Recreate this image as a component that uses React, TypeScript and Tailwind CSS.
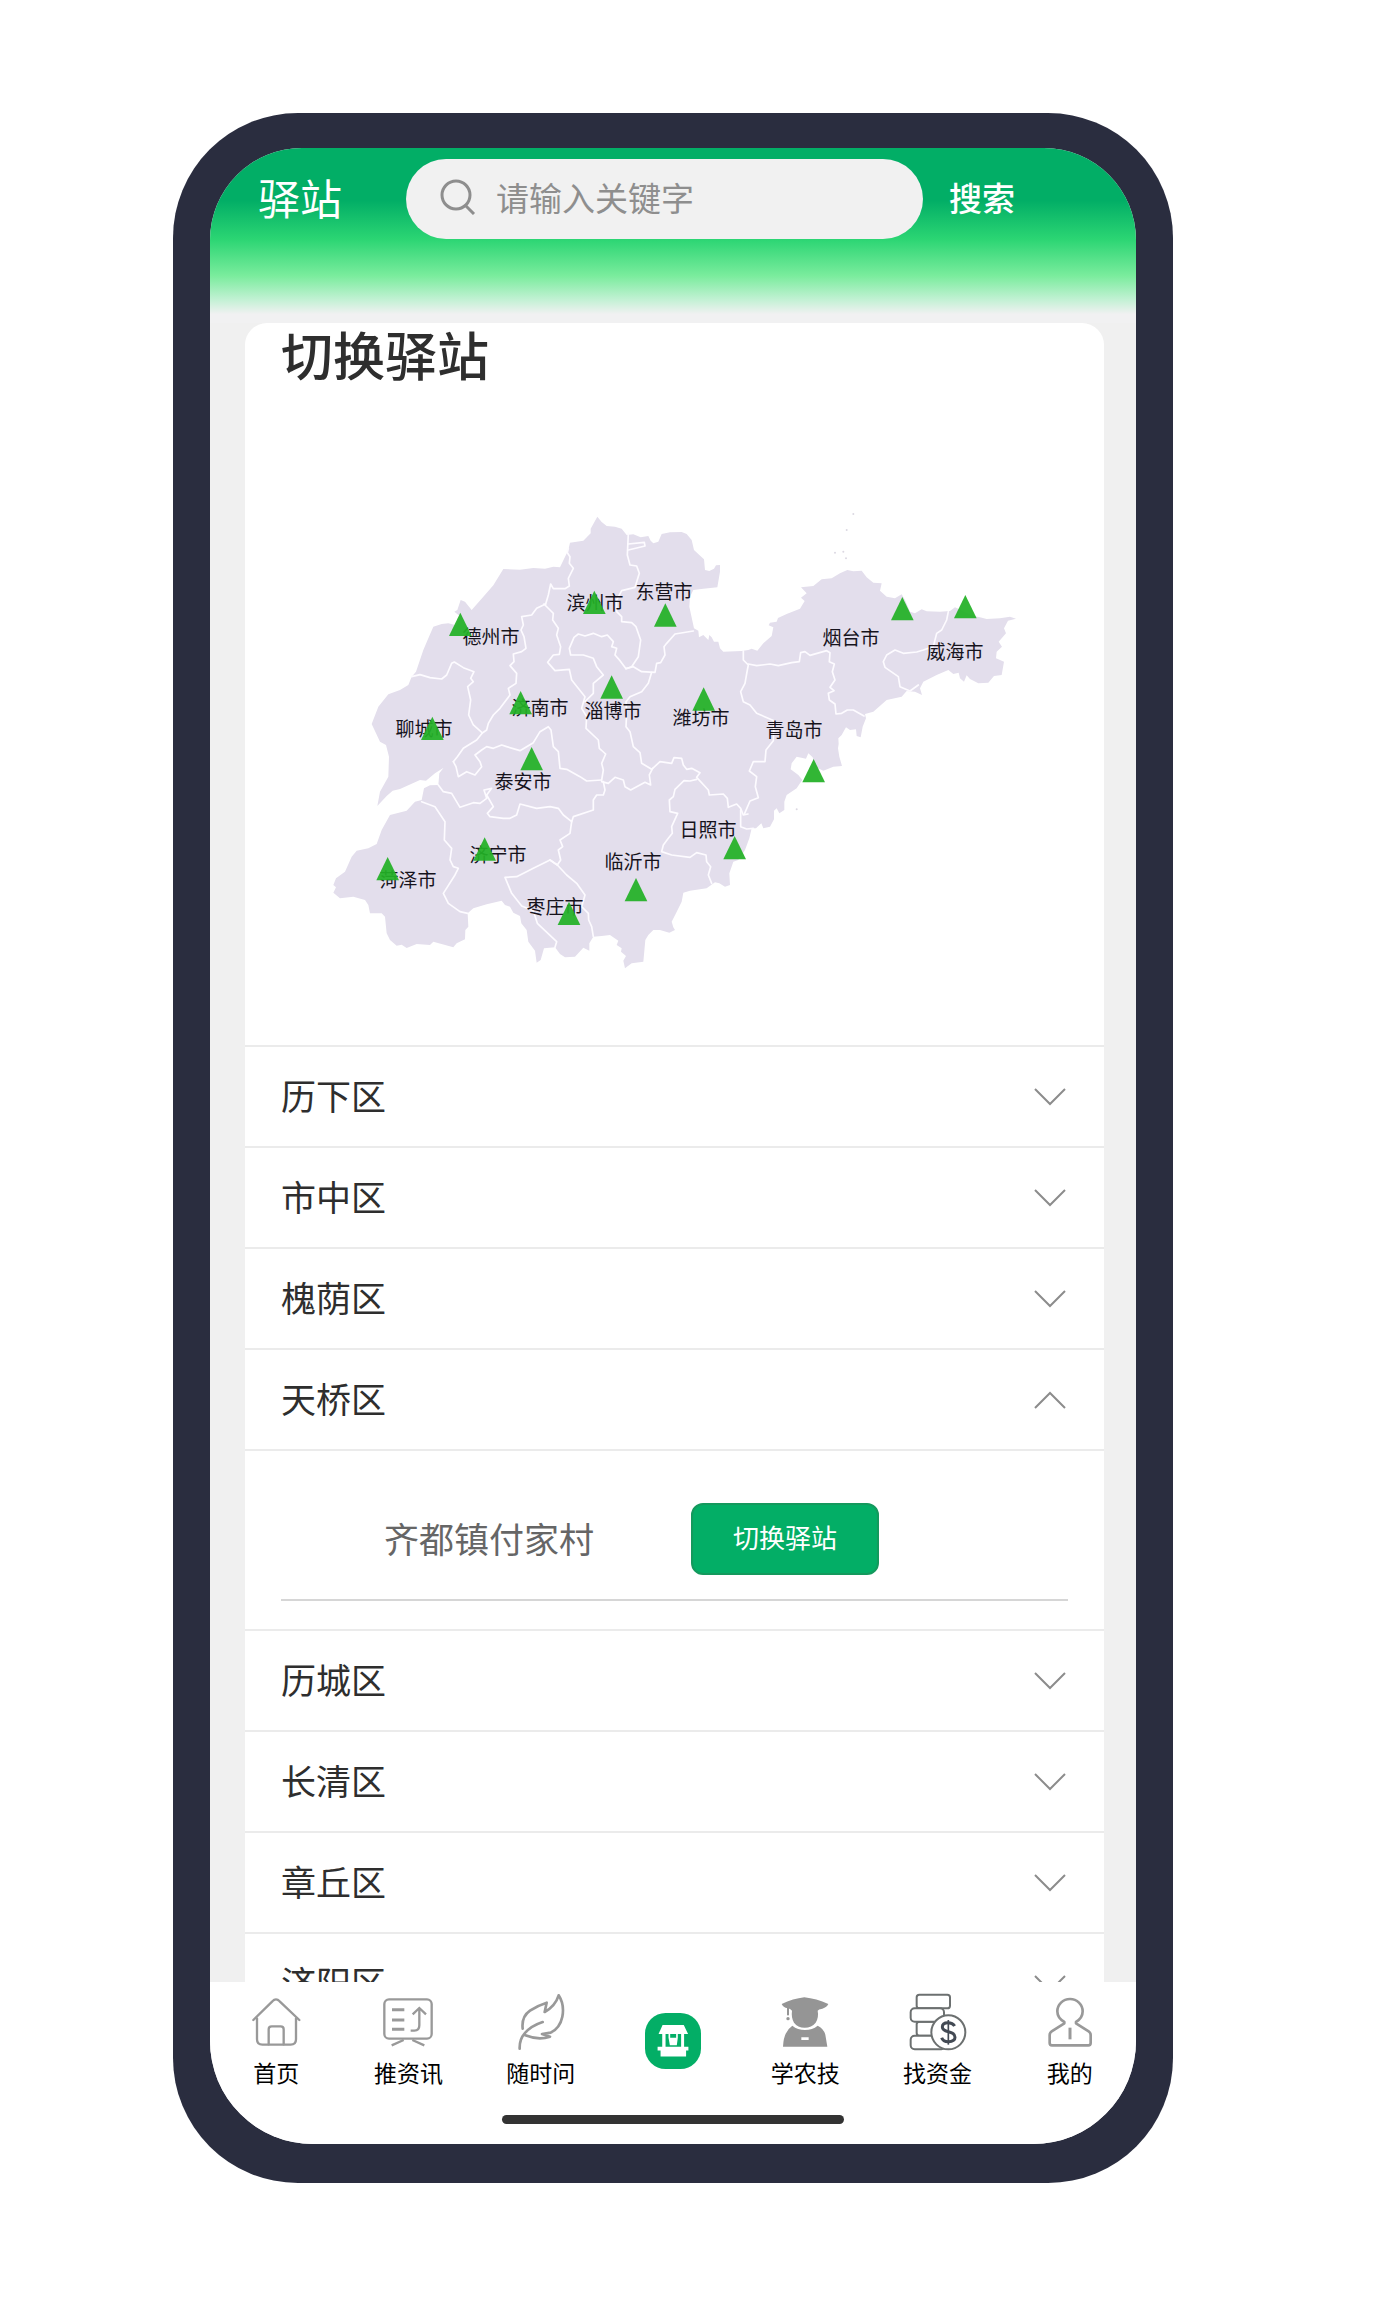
import { useState } from "react";

const LAND =
  "M832,50 L845,66 L860,78 L885,80 L905,86 L920,105 L940,103 L962,112 L985,108 L992,122 L1000,130 L1015,125 L1025,102 L1050,97 L1085,96 L1100,102 L1115,120 L1122,150 L1138,165 L1152,178 L1155,210 L1168,213 L1182,206 L1188,196 L1200,195 L1200,215 L1192,262 L1150,266 L1120,270 L1110,290 L1108,320 L1122,385 L1135,392 L1137,412 L1150,405 L1165,420 L1168,405 L1175,412 L1182,425 L1195,425 L1200,445 L1210,455 L1265,453 L1285,450 L1295,446 L1312,452 L1330,430 L1355,408 L1360,382 L1346,376 L1350,368 L1370,365 L1374,354 L1400,342 L1440,326 L1454,303 L1443,293 L1460,280 L1443,262 L1480,258 L1505,238 L1535,235 L1560,220 L1582,210 L1600,214 L1625,212 L1640,232 L1660,248 L1685,250 L1680,272 L1700,290 L1725,295 L1745,283 L1755,300 L1770,335 L1785,340 L1805,328 L1820,334 L1860,335 L1890,333 L1905,322 L1960,348 L1980,352 L2000,357 L2040,355 L2070,350 L2088,356 L2064,362 L2052,385 L2058,400 L2036,425 L2046,440 L2030,455 L2028,475 L2052,485 L2045,525 L2022,528 L2005,548 L1975,550 L1950,537 L1940,526 L1932,545 L1920,535 L1916,518 L1900,522 L1885,510 L1850,525 L1810,545 L1800,565 L1806,585 L1785,575 L1760,573 L1745,590 L1700,600 L1660,635 L1635,642 L1638,655 L1628,680 L1622,712 L1610,708 L1608,688 L1590,690 L1578,682 L1565,705 L1555,715 L1556,732 L1554,745 L1558,770 L1566,798 L1540,800 L1510,812 L1485,800 L1478,772 L1465,760 L1458,776 L1430,770 L1415,790 L1412,808 L1435,825 L1447,840 L1440,850 L1430,865 L1400,885 L1393,905 L1393,930 L1378,940 L1370,925 L1362,932 L1362,958 L1350,980 L1330,985 L1324,970 L1308,985 L1295,985 L1288,1015 L1275,1050 L1255,1080 L1240,1085 L1228,1120 L1230,1155 L1215,1160 L1198,1150 L1185,1147 L1160,1165 L1110,1172 L1090,1178 L1085,1205 L1068,1240 L1055,1265 L1060,1282 L1065,1290 L1048,1298 L1020,1290 L1000,1290 L985,1305 L976,1320 L970,1385 L935,1390 L915,1405 L910,1382 L918,1368 L903,1355 L905,1345 L890,1335 L895,1322 L870,1305 L845,1308 L820,1310 L808,1330 L808,1352 L790,1343 L765,1370 L735,1372 L720,1362 L705,1342 L672,1345 L662,1380 L650,1388 L645,1352 L625,1325 L620,1290 L604,1270 L600,1248 L580,1238 L570,1220 L555,1215 L545,1202 L500,1213 L460,1225 L443,1240 L445,1280 L436,1290 L435,1318 L410,1330 L400,1342 L340,1325 L330,1335 L290,1332 L260,1344 L245,1334 L230,1337 L210,1320 L200,1300 L195,1250 L185,1240 L150,1240 L145,1215 L135,1200 L100,1190 L60,1195 L40,1178 L48,1162 L40,1155 L48,1135 L75,1115 L95,1070 L110,1052 L145,1045 L170,1032 L185,990 L210,945 L260,932 L285,905 L305,900 L312,865 L330,856 L355,855 L358,820 L372,802 L400,785 L345,820 L318,842 L300,840 L240,867 L218,872 L200,888 L172,918 L180,875 L205,830 L207,770 L198,735 L180,725 L155,672 L175,620 L205,583 L240,570 L265,555 L275,530 L288,515 L310,450 L325,415 L340,380 L365,372 L385,370 L408,376 L422,350 L403,335 L412,330 L422,300 L435,305 L455,330 L490,290 L520,256 L550,207 L600,209 L640,204 L675,206 L700,200 L720,202 L745,150 L750,128 L790,122 L812,100 L812,86 Z";

const BORDERS = [
  "M745,145 L742,158 L750,170 L748,190 L760,205 L745,235 L748,258 L735,266 L700,266 L692,252 L685,285 L677,312",
  "M677,312 L650,325 L635,345 L605,350 L610,375 L603,390 L612,410 L618,445 L605,455 L580,462 L582,485 L570,497 L590,520 L588,550 L565,565 L570,585 L540,625 L520,645 L505,670 L500,690 L487,699",
  "M275,530 L300,524 L330,533 L365,537 L380,525 L395,490 L403,486 L430,503 L462,515 L452,535 L460,545 L443,560 L452,600 L446,645 L460,675 L487,699",
  "M487,699 L470,720 L430,745 L412,770 L400,785",
  "M672,312 L690,330 L700,340 L698,360 L715,385 L710,405 L722,440 L718,463 L700,465 L683,487 L705,512 L748,508 L755,540 L795,590 L785,625 L800,650 L798,685 L835,720 L838,745 L857,762 L845,790 L850,810 L845,840",
  "M925,100 L922,165 L930,195 L950,198 L958,220 L945,262 L905,272 L890,300 L890,335 L905,350 L905,365 L935,368 L948,380 L962,420 L955,470 L935,500 L918,506 L900,482 L885,465 L890,445 L875,440 L880,425 L862,405 L845,410 L820,400 L795,408 L775,402 L762,412 L748,445 L752,465 L790,465 L820,475 L830,500 L850,525 L820,550 L820,580 L795,605",
  "M918,506 L940,500 L965,515 L1005,517 L1010,490 L1022,488 L1035,465 L1032,440 L1040,430 L1065,402 L1120,393",
  "M995,517 L985,550 L965,575 L930,590 L918,605 L920,640 L918,680 L930,695 L940,740 L960,758 L965,790 L995,808",
  "M845,845 L865,850 L885,832 L910,840 L915,860 L932,870 L975,847 L992,855 L988,825 L998,805",
  "M995,808 L1020,785 L1055,790 L1062,773 L1085,775 L1090,795 L1100,808 L1115,805 L1140,818 L1130,832 L1165,870 L1168,885 L1210,882 L1222,895 L1225,922 L1250,912 L1262,925 L1270,945 L1284,942",
  "M1274,940 L1290,903 L1315,893 L1306,860 L1310,830 L1288,813 L1300,785 L1335,785 L1338,750 L1360,722 L1362,662 L1310,640 L1290,615 L1270,605 L1262,575 L1275,550 L1282,510 L1285,495 L1270,480 L1270,452",
  "M1285,492 L1310,497 L1350,492 L1375,497 L1415,488 L1438,485 L1442,458 L1455,455 L1470,466 L1520,452 L1530,458 L1528,485 L1543,492 L1537,515 L1545,540 L1530,562 L1542,572 L1525,580 L1528,600 L1545,612 L1548,642 L1565,640 L1582,630 L1600,630 L1632,648",
  "M1885,335 L1880,360 L1865,390 L1850,400 L1840,440 L1810,450 L1790,456 L1750,460 L1725,450 L1700,465 L1690,485 L1695,502 L1735,530 L1740,560 L1770,573 L1795,555",
  "M1130,838 L1110,843 L1092,842 L1065,868 L1060,890 L1048,900 L1050,935 L1073,940 L1055,980 L1057,1000 L1045,1015 L1030,1035 L1025,1055 L1055,1065 L1110,1072 L1130,1058 L1158,1065 L1160,1085 L1172,1100 L1165,1125 L1175,1150",
  "M1262,930 L1262,980 L1280,987 L1300,985",
  "M400,785 L408,800 L415,830 L440,815 L465,825 L485,800 L480,785 L465,765 L485,750 L500,740 L520,745 L545,735 L560,740 L600,752 L640,728 L660,695 L685,680 L693,690 L700,740 L715,755 L720,805 L740,808 L780,830 L800,843 L845,840",
  "M355,855 L370,875 L395,880 L420,922 L460,908 L480,910 L500,895 L492,870 L515,865 L500,885 L520,920 L502,940 L510,950 L550,955 L570,955 L590,945 L600,912 L650,925 L690,920 L715,925 L730,945 L755,965 L760,950 L820,930 L820,900 L830,885 L850,885 L855,870 L850,845",
  "M305,905 L345,920 L375,965 L373,1020 L395,1045 L390,1080 L400,1100 L415,1105 L405,1125 L370,1180 L385,1210 L420,1235 L443,1240",
  "M755,965 L750,1000 L720,1020 L728,1040 L715,1050 L722,1080 L712,1095 L690,1080 L640,1105 L590,1130 L555,1132 L575,1180 L605,1218 L640,1232 L652,1270 L710,1325 L705,1342",
  "M690,1080 L712,1095 L740,1125 L770,1150 L795,1185 L785,1220 L805,1240 L806,1260 L815,1280 L820,1310",
  "M925,132 L973,127 L975,138 L925,150",
];

const CITIES = [
  { name: "德州市", x: 491, y: 637, px: 421, py: 338 },
  { name: "滨州市", x: 595, y: 603, px: 823, py: 272 },
  { name: "东营市", x: 664, y: 592, px: 1036, py: 310 },
  { name: "济南市", x: 540, y: 708, px: 602, py: 573 },
  { name: "聊城市", x: 424, y: 729, px: 337, py: 650 },
  { name: "淄博市", x: 613, y: 711, px: 875, py: 526 },
  { name: "泰安市", x: 523, y: 782, px: 635, py: 741 },
  { name: "济宁市", x: 498, y: 855, px: 494, py: 1012 },
  { name: "菏泽市", x: 408, y: 880, px: 203, py: 1071 },
  { name: "枣庄市", x: 555, y: 907, px: 747, py: 1205 },
  { name: "临沂市", x: 633, y: 862, px: 948, py: 1134 },
  { name: "潍坊市", x: 701, y: 718, px: 1151, py: 562 },
  { name: "烟台市", x: 851, y: 638, px: 1747, py: 291 },
  { name: "威海市", x: 955, y: 652, px: 1936, py: 285 },
  { name: "青岛市", x: 794, y: 730, px: 1481, py: 777 },
  { name: "日照市", x: 708, y: 830, px: 1244, py: 1008 },
];

const ISLETS = [
  [1600, 42],
  [1580, 90],
  [1545, 158],
  [1570, 155],
  [1578, 175],
  [1430, 928],
];

function ProvinceMap() {
  return (
    <svg viewBox="245 387 859 658" className="block w-full" role="img" aria-label="山东省驿站地图">
      <g transform="translate(320 500) scale(0.33333)" strokeLinejoin="round" strokeLinecap="round">
        <path d={LAND} fill="#e3deec" />
        {BORDERS.map((d) => (
          <path key={d} d={d} fill="none" stroke="#fdfbff" strokeWidth="5" />
        ))}
        {ISLETS.map(([x, y]) => (
          <circle key={`${x}-${y}`} cx={x} cy={y} r="3" fill="#dcd8e2" />
        ))}
      </g>
      <g fontSize="19" textAnchor="middle" fill="#16131c">
        {CITIES.map((c) => (
          <text key={c.name} x={c.x} y={c.y + 7}>
            {c.name}
          </text>
        ))}
      </g>
      <g transform="translate(320 500) scale(0.33333)" fill="#22b026" fillOpacity="0.93">
        {CITIES.map((c) => (
          <path key={c.name} d={`M${c.px},${c.py} l34,70 h-68 z`} />
        ))}
      </g>
    </svg>
  );
}

const DISTRICTS = ["历下区", "市中区", "槐荫区", "天桥区", "历城区", "长清区", "章丘区", "济阳区"];

function Chevron({ up }: { up: boolean }) {
  return (
    <svg width="32" height="18" viewBox="0 0 32 18" fill="none" stroke="#8c8c8c" strokeWidth="2" aria-hidden="true">
      <path d={up ? "M1,17 L16,2 L31,17" : "M1,1 L16,16 L31,1"} />
    </svg>
  );
}

function HomeIcon() {
  return (
    <svg viewBox="54 72 168 168" className="size-14" fill="none" stroke="#999" strokeWidth="7" strokeLinecap="round">
      <path d="M70,150 L127,94 Q138,82 149,94 L208,150" />
      <path d="M81,145 V208 Q81,224 97,224 H182 Q198,224 198,208 V145" />
      <path d="M116,223 V178 Q116,169 125,169 H152 Q161,169 161,178 V223" />
    </svg>
  );
}

function NewsIcon() {
  return (
    <svg viewBox="453 72 168 168" className="size-14" fill="none" stroke="#999" strokeWidth="7">
      <rect x="466" y="88" width="142" height="118" rx="14" />
      <path d="M489,119 H526 M489,150 H526 M489,178 H526" strokeWidth="9" />
      <path d="M545,182 H556 Q571,182 571,166 V118 M551,133 L571,114 L591,133" />
      <path d="M488,226 L524,210 M586,226 L550,210" />
    </svg>
  );
}

function LeafIcon() {
  return (
    <svg viewBox="849 72 168 168" className="size-14" fill="none" stroke="#999" strokeWidth="8" strokeLinecap="round" strokeLinejoin="round">
      <path d="M869,236 Q868,208 884,190 Q902,168 938,156" />
      <path d="M878,176 Q874,140 900,122 Q924,106 950,98 L944,126 Q976,108 986,76 Q1004,104 997,140 Q990,174 962,188 L936,192 L960,200 Q926,212 886,196" />
    </svg>
  );
}

function StationIcon() {
  return (
    <svg viewBox="137 128 169 169" className="size-14">
      <rect x="137" y="128" width="169" height="169" rx="62" fill="#03ae66" />
      <g fill="#fff">
        <path d="M190,164 H254 L267,191 H178 Z" />
        <path d="M189,191 h10 v40 h-10 z M246,191 h9 v40 h-9 z" />
        <path d="M208,191 h5 v12 h18 v-12 h5 v12 l-3,22 h-21 l-4,-22 z" />
        <path d="M175,230 H268 V241 H261 V259 H184 V241 H175 Z" />
      </g>
    </svg>
  );
}

function GraduateIcon() {
  return (
    <svg viewBox="532 72 168 168" className="size-14" fill="#959595">
      <path d="M546,102 Q580,86 614,82 Q650,86 686,102 Q682,112 668,116 Q656,118 654,122 Q658,142 648,158 Q636,173 615,173 Q594,173 583,158 Q574,142 577,122 Q572,116 564,115 Q550,112 546,102 Z" />
      <path d="M562,114 h6 v22 h-6 z" />
      <circle cx="565" cy="146" r="5" />
      <path
        fillRule="evenodd"
        d="M578,167 Q594,180 616,180 Q638,180 654,167 Q672,176 677,194 L683,230 H550 Q552,184 578,167 Z M605,202 V210 H627 V202 Z"
      />
    </svg>
  );
}

function FundsIcon() {
  return (
    <svg viewBox="238 72 168 168" className="size-14" overflow="visible" fill="#fff" stroke="#6c7070" strokeWidth="6">
      <rect x="258" y="74" width="100" height="41" rx="8" />
      <rect x="258" y="155" width="90" height="42" rx="8" />
      <rect x="240" y="115" width="100" height="40" rx="12" />
      <rect x="240" y="197" width="104" height="41" rx="12" />
      <circle cx="353" cy="187" r="51" />
      <path
        d="M372,168 Q366,158 352,158 Q335,158 335,171 Q335,181 353,185 Q373,189 373,202 Q373,215 353,215 Q337,215 333,203"
        fill="none"
        stroke="#434a54"
        strokeWidth="9"
      />
      <path d="M353,150 V224" stroke="#434a54" strokeWidth="5" />
    </svg>
  );
}

function ProfileIcon() {
  return (
    <svg viewBox="636 72 168 168" className="size-14" fill="none" stroke="#999" strokeWidth="8" strokeLinejoin="round">
      <path d="M703,160 V156 Q682,144 682,124 A38,37 0 0 1 758,124 Q758,144 738,156 V160 L776,184 Q782,188 782,195 V219 Q782,226 775,226 H666 Q659,226 659,219 V195 Q659,188 665,184 Z" />
      <path d="M720,173 V208" strokeWidth="9" />
    </svg>
  );
}

const TABS = [
  { label: "首页", icon: <HomeIcon /> },
  { label: "推资讯", icon: <NewsIcon /> },
  { label: "随时问", icon: <LeafIcon /> },
  { label: "", icon: <StationIcon /> },
  { label: "学农技", icon: <GraduateIcon /> },
  { label: "找资金", icon: <FundsIcon /> },
  { label: "我的", icon: <ProfileIcon /> },
];

export default function App() {
  const [open, setOpen] = useState("天桥区");

  return (
    <div className="flex h-screen bg-white pt-[113px] pr-[211px] pb-[131px] pl-[173px] font-['Noto_Sans_CJK_SC',sans-serif]">
      <div className="min-w-0 flex-1 rounded-[125px] bg-[#2a2d3f] px-[37px] pt-[35px] pb-[39px]">
        <div className="flex h-full flex-col overflow-hidden rounded-t-[92px] rounded-b-[103px] bg-[#f0f0f0]">
          <header className="flex h-[175px] shrink-0 items-start bg-linear-[180deg,#02ae66_0%,#02ae66_30%,#2bd573_52%,#7aec9d_73%,#c4f1d5_87%,#f1f1f2_95%] pt-[11px] pl-12">
            <h1 className="w-[148px] text-[42px] leading-[76px] text-white">驿站</h1>
            <label className="flex h-20 w-[517px] items-center gap-5 rounded-full bg-[#f1f1f1] pb-1 pl-[34px]">
              <svg width="36" height="36" viewBox="0 0 36 36" fill="none" stroke="#8e8e8e" strokeWidth="3" className="shrink-0" aria-hidden="true">
                <circle cx="16" cy="16" r="14" />
                <path d="M25,26 L34,35" />
              </svg>
              <input
                type="search"
                aria-label="搜索驿站"
                placeholder="请输入关键字"
                className="min-w-0 flex-1 bg-transparent text-[33px] leading-[48px] text-gray-700 outline-none placeholder:text-[#8e8e8e]"
              />
            </label>
            <button type="button" className="ml-[26px] text-[33px] leading-[76px] font-medium text-white">
              搜索
            </button>
          </header>

          <main className="min-h-0 flex-1 overflow-hidden pr-8 pl-[35px]">
            <section className="rounded-t-[22px] bg-white">
              <h2 className="pb-0.5 pl-9 text-[52px] leading-[62px] font-medium text-[#2e2e2e]">切换驿站</h2>
              <ProvinceMap />
              <ul>
                {DISTRICTS.map((name) => (
                  <li key={name} className="border-t-2 border-[#ebebeb]">
                    <button
                      type="button"
                      aria-expanded={open === name}
                      onClick={() => setOpen(open === name ? "" : name)}
                      className="flex h-[99px] w-full items-center justify-between pr-[38px] pl-9 text-[35px] text-[#2e2e2e]"
                    >
                      <span className="pb-[3px]">{name}</span>
                      <Chevron up={open === name} />
                    </button>
                    {open === name && (
                      <div className="border-t-2 border-[#ebebeb] px-9 pt-[52px] pb-7">
                        <div className="flex items-center gap-[97px] border-b-2 border-[#d6d6d6] pb-6 pl-[103px]">
                          <span className="pb-0.5 text-[35px] text-[#666]">齐都镇付家村</span>
                          <button
                            type="button"
                            className="h-[72px] w-[188px] rounded-xl border-2 border-[#14995d] bg-[#03ae66] pb-1.5 text-[26px] text-white"
                          >
                            切换驿站
                          </button>
                        </div>
                      </div>
                    )}
                  </li>
                ))}
              </ul>
            </section>
          </main>

          <footer className="shrink-0 bg-white pb-5">
            <nav className="grid grid-cols-7 pt-3 pb-[29px]">
              {TABS.map((tab) => (
                <a
                  key={tab.label}
                  href="#"
                  aria-label={tab.label || "驿站"}
                  className={
                    tab.label
                      ? "flex flex-col items-center gap-2 text-[23px] leading-7 text-black"
                      : "flex flex-col items-center pt-[19px]"
                  }
                >
                  {tab.icon}
                  {tab.label && <span>{tab.label}</span>}
                </a>
              ))}
            </nav>
            <div className="mx-auto h-[9px] w-[342px] rounded-full bg-[#333]" />
          </footer>
        </div>
      </div>
    </div>
  );
}
